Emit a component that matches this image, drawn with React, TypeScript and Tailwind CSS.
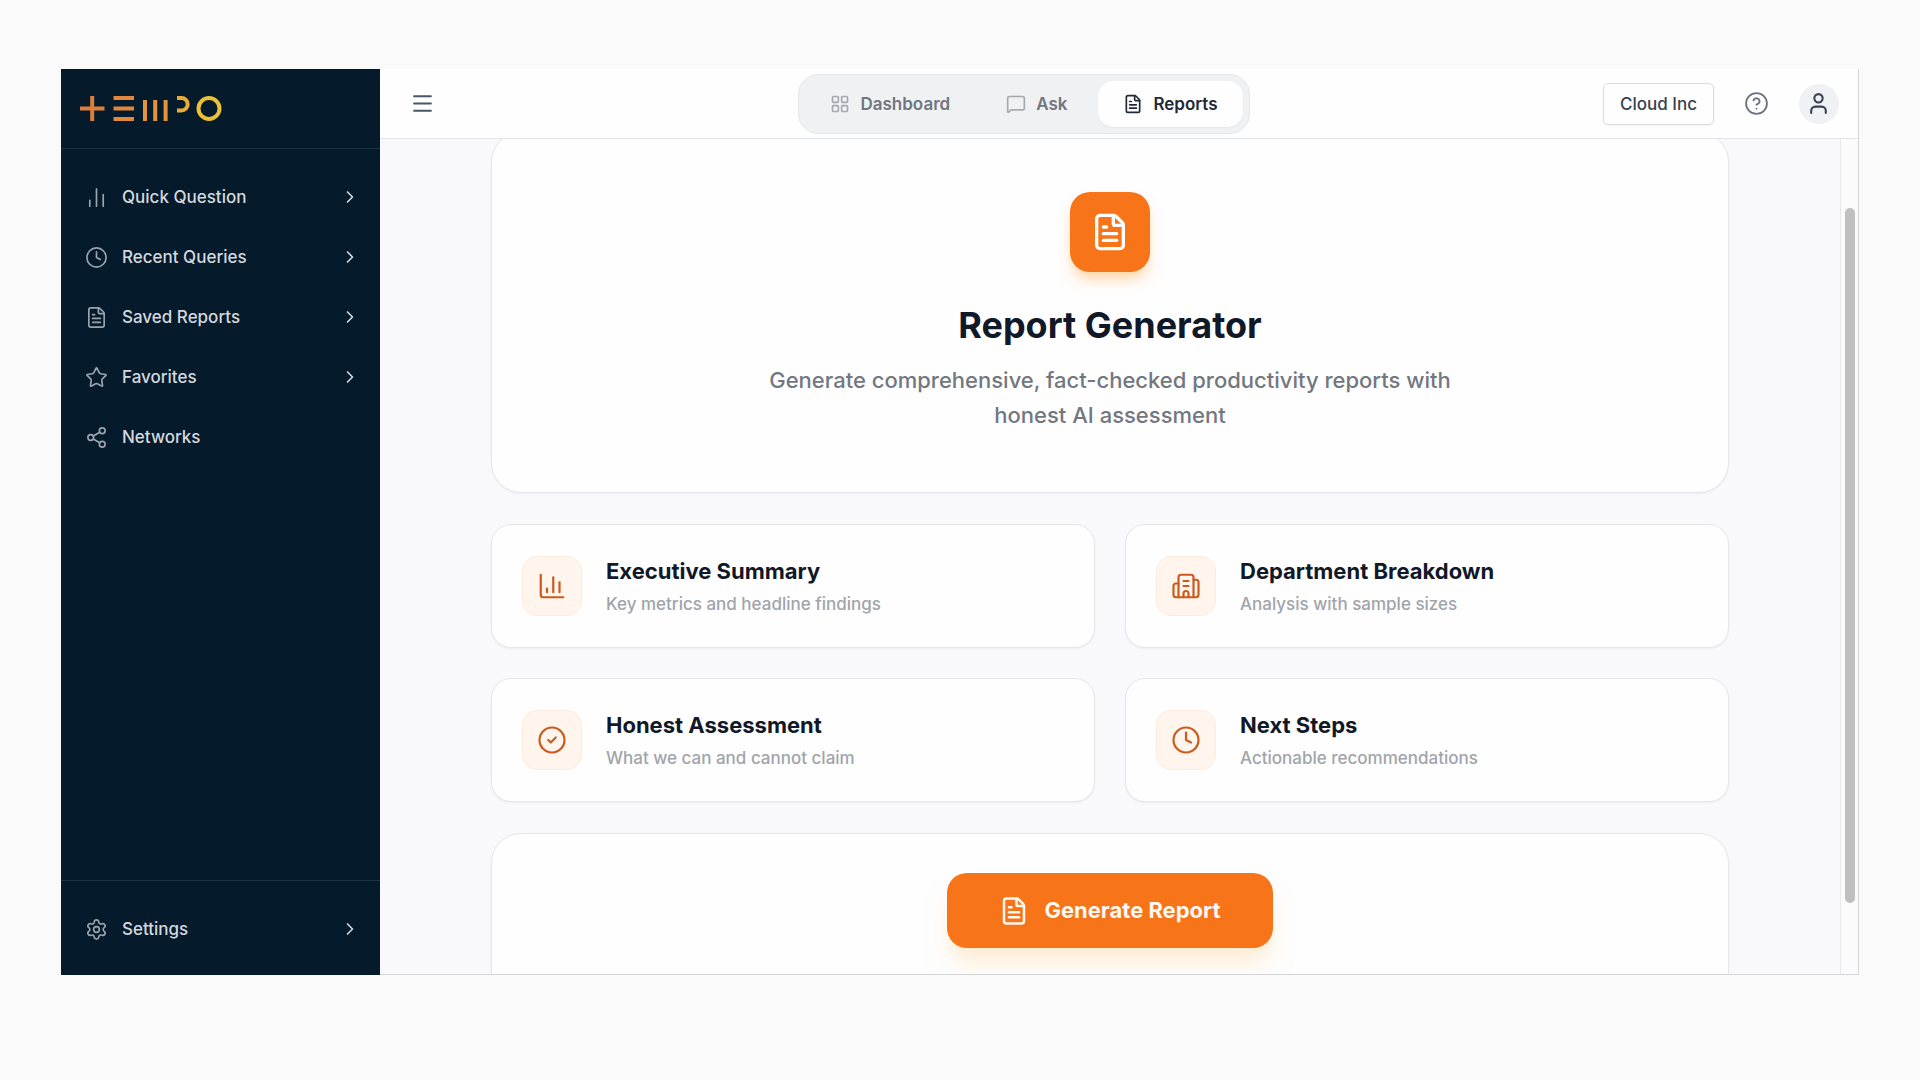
import {
  Building2,
  ChartColumn,
  ChartNoAxesColumn,
  ChevronRight,
  CircleCheck,
  CircleQuestionMark,
  Clock,
  FileText,
  LayoutGrid,
  Menu,
  MessageSquare,
  Settings,
  Share2,
  Star,
  User,
} from 'lucide-react'

const menuItems = [
  { label: 'Quick Question', icon: ChartNoAxesColumn, arrow: true },
  { label: 'Recent Queries', icon: Clock, arrow: true },
  { label: 'Saved Reports', icon: FileText, arrow: true },
  { label: 'Favorites', icon: Star, arrow: true },
  { label: 'Networks', icon: Share2, arrow: false },
]

const tabs = [
  { label: 'Dashboard', icon: LayoutGrid, active: false },
  { label: 'Ask', icon: MessageSquare, active: false },
  { label: 'Reports', icon: FileText, active: true },
]

const features = [
  { title: 'Executive Summary', text: 'Key metrics and headline findings', icon: ChartColumn },
  { title: 'Department Breakdown', text: 'Analysis with sample sizes', icon: Building2 },
  { title: 'Honest Assessment', text: 'What we can and cannot claim', icon: CircleCheck },
  { title: 'Next Steps', text: 'Actionable recommendations', icon: Clock },
]

const Logo = () => {
  return (
    <svg width="142" height="26" viewBox="0 0 142 26" fill="none" role="img" aria-label="Tempo" strokeWidth="4">
      <path d="M0 12.5H24.5M12.2 0V25" stroke="#dd7f3c" />
      <path d="M33.5 2H54M33.5 12.5H54M33.5 23H54" stroke="#e0883c" />
      <path d="M65 4V25M75.2 4V25M85.6 4V25" stroke="#e4953a" />
      <path d="M97 2H101.5A6.2 6.2 0 0 1 101.5 14.4H97" stroke="#eaaa36" />
      <circle cx="129" cy="12.5" r="10.5" stroke="#ebc236" />
    </svg>
  )
}

const SidebarItem = ({ label, icon: Icon, arrow }: { label: string; icon: typeof Clock; arrow: boolean }) => {
  return (
    <button className="flex h-[60px] w-full items-center pr-5 pl-6 text-left">
      <Icon size={23} strokeWidth={1.75} className="text-[#9aa3af]" />
      <span className="ml-3.5 flex-1 text-[17px] leading-[26px] font-medium text-[#d3d8de]">{label}</span>
      {arrow && <ChevronRight size={20} strokeWidth={2} className="text-[#d3d8de]" />}
    </button>
  )
}

const Sidebar = () => {
  return (
    <aside className="flex w-[319px] shrink-0 flex-col bg-[#051a2a]">
      <div className="flex h-20 items-center border-b border-[#1c3346] px-[19px]">
        <Logo />
      </div>
      <nav className="flex-1 py-[18px]">
        {menuItems.map((item) => (
          <SidebarItem key={item.label} {...item} />
        ))}
      </nav>
      <div className="border-t border-[#1c3346] pt-[18px] pb-4">
        <SidebarItem label="Settings" icon={Settings} arrow />
      </div>
    </aside>
  )
}

const Header = () => {
  return (
    <header className="flex h-[70px] shrink-0 items-center justify-between border-b border-[#e3e4e8] bg-[#fefefe] pr-[19px] pl-5">
      <button aria-label="Toggle menu" className="p-2.5 text-[#4b5563]">
        <Menu size={25} />
      </button>
      <nav className="flex gap-1.5 rounded-[20px] border border-[#e5e7eb] bg-[#f0f1f3] p-[6px]">
        {tabs.map(({ label, icon: Icon, active }) => (
          <button
            key={label}
            className={
              active
                ? 'flex h-[46px] items-center gap-2.5 rounded-[15px] bg-[#fefefe] px-[25px] text-[17px] leading-[26px] font-semibold text-[#1f2937] shadow-xs'
                : 'flex h-[46px] items-center gap-2.5 rounded-[15px] px-[25px] text-[17px] leading-[26px] font-semibold text-[#6f7681]'
            }
          >
            <Icon size={20} className={active ? 'text-[#1f2937]' : 'text-[#a4a9b2]'} />
            {label}
          </button>
        ))}
      </nav>
      <div className="flex items-center">
        <button className="h-[42px] rounded-[5px] border border-[#d9dbdf] px-4 text-[17px] leading-[26px] font-medium text-[#374151] shadow-xs">
          Cloud Inc
        </button>
        <button aria-label="Help" className="ml-5 p-2.5 text-[#6b7280]">
          <CircleQuestionMark size={25} strokeWidth={1.75} />
        </button>
        <button aria-label="Account" className="ml-5 flex size-10 items-center justify-center rounded-full bg-[#f0f1f4] text-[#374151]">
          <User size={25} />
        </button>
      </div>
    </header>
  )
}

const Hero = () => {
  return (
    <section className="flex flex-col items-center rounded-[30px] border border-[#e5e7ec] bg-[#fefefe] px-10 py-[59px] text-center shadow-xs">
      <div className="flex size-20 items-center justify-center rounded-[20px] bg-[#f77418] text-white shadow-lg shadow-orange-200">
        <FileText size={40} />
      </div>
      <h1 className="mt-[30px] text-[36px] leading-[46px] font-bold text-[#111827]">Report Generator</h1>
      <p className="mt-[15px] max-w-[720px] text-[22px] leading-[35px] font-medium text-[#737780]">
        Generate comprehensive, fact-checked productivity reports with honest AI assessment
      </p>
    </section>
  )
}

const App = () => {
  return (
    <div className="flex h-screen bg-[#fafafa] px-[61px] pt-[69px] pb-[105px] font-[Inter,sans-serif]">
      <div className="flex min-w-0 flex-1">
        <Sidebar />
        <div className="flex min-w-0 flex-1 flex-col border-r border-b border-[#d4d5d8]">
          <Header />
          <div className="flex min-h-0 flex-1 bg-[#f9f9fb]">
            <main className="min-w-0 flex-1 overflow-hidden px-[111px]">
              <div className="-mt-[7px] flex flex-col gap-[31px]">
                <Hero />
                <div className="grid grid-cols-2 gap-[30px]">
                  {features.map(({ title, text, icon: Icon }) => (
                    <div key={title} className="flex h-[124px] items-center gap-6 rounded-[20px] border border-[#e5e7ec] bg-[#fefefe] px-[30px] shadow-xs">
                      <div className="flex size-[60px] shrink-0 items-center justify-center rounded-[15px] border border-[#fdebdb] bg-[#fff5ec] text-[#cb5a1e]">
                        <Icon size={30} strokeWidth={1.75} />
                      </div>
                      <div className="pt-0.5">
                        <h2 className="text-[22px] leading-[34px] font-bold text-[#111827]">{title}</h2>
                        <p className="text-[17px] leading-8 font-medium text-[#a0a4ab]">{text}</p>
                      </div>
                    </div>
                  ))}
                </div>
                <section className="flex justify-center rounded-[30px] border border-[#e5e7ec] bg-[#fefefe] px-10 pt-[39px] pb-[60px] shadow-xs">
                  <button className="flex h-[75px] items-center gap-[15px] rounded-[20px] bg-[#f77418] px-[52px] text-[22px] font-bold text-[#fff8f0] shadow-xl shadow-orange-100">
                    <FileText size={30} />
                    Generate Report
                  </button>
                </section>
              </div>
            </main>
            <div className="w-[18px] shrink-0 border-l border-[#e8e8ea] bg-[#fbfbfb] pt-[69px] pl-1">
              <div className="h-[695px] w-2.5 rounded-full bg-[#bfbfc0]" />
            </div>
          </div>
        </div>
      </div>
    </div>
  )
}

export default App
